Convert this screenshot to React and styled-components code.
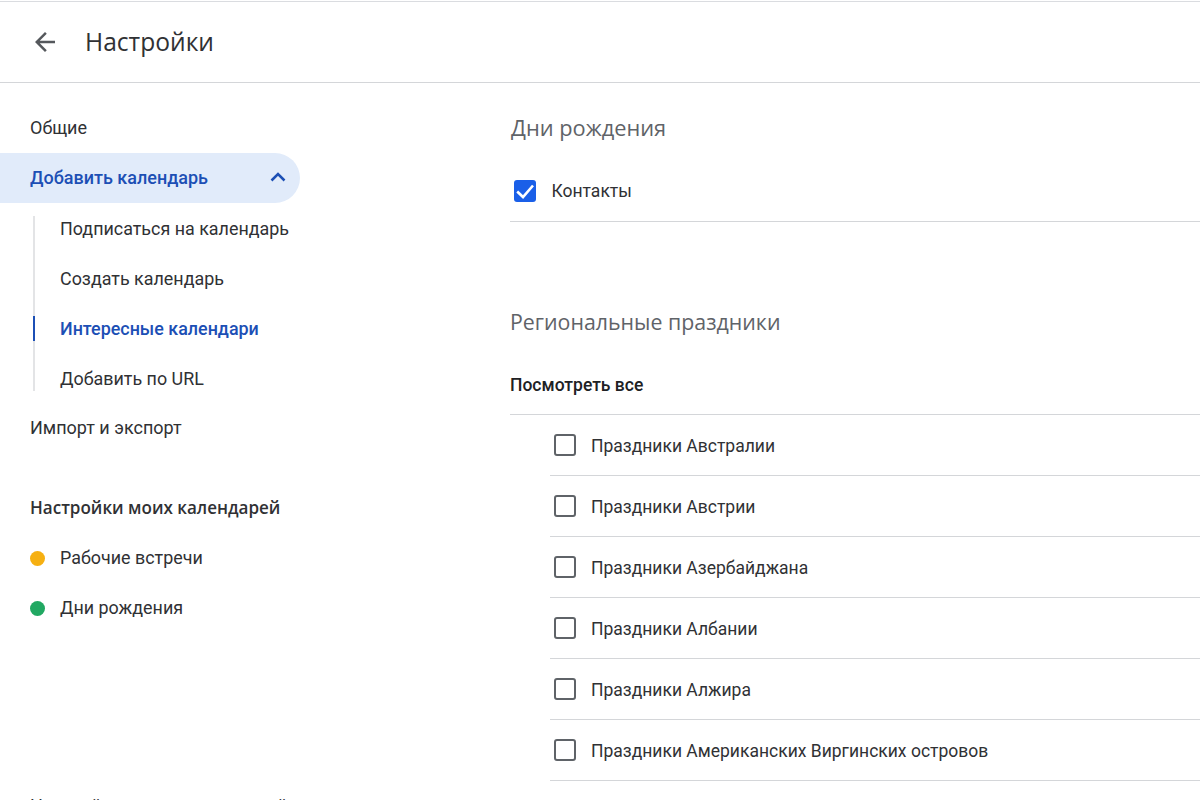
import React from 'react';
import styled, { createGlobalStyle } from 'styled-components';

const GlobalStyle = createGlobalStyle`
  html, body {
    margin: 0;
    padding: 0;
    height: 100%;
    overflow: hidden;
    background: #fff;
  }
  body {
    font-family: Roboto, "Liberation Sans", sans-serif;
    color: #303134;
  }
`;

const Page = styled.div`
  width: 1200px;
  height: 800px;
  overflow: hidden;
  padding-top: 1px;
  box-sizing: border-box;
  display: flex;
  flex-direction: column;
`;

const Header = styled.header`
  height: 82px;
  flex: none;
  box-sizing: border-box;
  border-top: 1px solid #dadce0;
  border-bottom: 1px solid #d4d6d9;
  display: flex;
  align-items: center;
  padding-left: 30px;
`;

const BackButton = styled.div`
  width: 30px;
  height: 30px;
  display: flex;
  align-items: center;
  justify-content: center;
  margin-right: 25px;
`;

const Title = styled.h1`
  margin: 0 0 2px;
  font: 400 24.6px "Open Sans", sans-serif;
  color: #303134;
`;

const Body = styled.div`
  display: flex;
  flex: 1;
  min-height: 0;
`;

const Sidebar = styled.nav`
  width: 300px;
  flex: none;
  padding-top: 20px;
  margin-right: 210px;
`;

const NavItem = styled.div`
  height: 50px;
  box-sizing: border-box;
  display: flex;
  align-items: center;
  justify-content: space-between;
  padding: 0 12px 2px 30px;
  font-size: 18px;
  color: ${(p) => (p.$active ? '#1c4fb5' : '#303134')};
  font-weight: ${(p) => (p.$active ? 500 : 400)};
  background: ${(p) => (p.$active ? '#e1ebfa' : 'transparent')};
  border-radius: ${(p) => (p.$active ? '0 25px 25px 0' : '0')};
`;

const SubList = styled.div`
  margin: 1px 0 -1px 33px;
`;

const SubItem = styled.div`
  position: relative;
  height: 50px;
  box-sizing: border-box;
  display: flex;
  align-items: center;
  padding: 0 0 2px 27px;
  font-size: 17.9px;
  color: ${(p) => (p.$active ? '#1c4fb5' : '#303134')};
  font-weight: ${(p) => (p.$active ? 500 : 400)};

  /* vertical rail, inset at both ends of the list */
  &::before {
    content: '';
    position: absolute;
    left: 0;
    top: 0;
    bottom: 0;
    width: 2px;
    background: #e3e4e6;
  }
  &:first-child::before {
    top: 12px;
  }
  &:last-child::before {
    bottom: 13px;
  }
  &::after {
    content: '';
    display: ${(p) => (p.$active ? 'block' : 'none')};
    position: absolute;
    left: 0;
    top: 12px;
    bottom: 13px;
    width: 2px;
    background: #1c4fb5;
  }
`;

const SectionLabel = styled.div`
  margin-top: 30px;
  height: 50px;
  box-sizing: border-box;
  display: flex;
  align-items: center;
  padding: 0 0 2px 30px;
  font: 600 17.05px "Open Sans", sans-serif;
  color: #303134;
`;

const CalendarRow = styled.div`
  height: 50px;
  display: flex;
  align-items: center;
  padding-left: 30px;
  font-size: 17.9px;
  color: #303134;
`;

const CalendarName = styled.span`
  margin-bottom: 2px;
`;

const Dot = styled.span`
  width: 15px;
  height: 15px;
  border-radius: 50%;
  margin-right: 15px;
  background: ${(p) => p.$color};
`;

const CutOffLabel = styled.div`
  margin-top: 162px;
  padding-left: 30px;
  font-size: 18px;
`;

const Main = styled.main`
  flex: 1;
  min-width: 0;
  padding-top: 27px;
`;

const SectionTitle = styled.h2`
  margin: 0 0 1px 1px;
  font: 400 21.8px/36px "Open Sans", sans-serif;
  color: #5f6368;
`;

const ContactRow = styled.div`
  height: 75px;
  padding-top: 14px;
  box-sizing: border-box;
  border-bottom: 1px solid #d4d6d9;
  display: flex;
  align-items: center;
  padding-left: 4px;
  gap: 15.5px;
  font-size: 17.5px;
  color: #303134;
`;

const CheckBox = styled.span`
  width: 22px;
  height: 22px;
  flex: none;
  box-sizing: border-box;
  border-radius: 3px;
  display: flex;
  align-items: center;
  justify-content: center;
  background: ${(p) => (p.$checked ? '#1a5fe8' : 'transparent')};
  border: ${(p) => (p.$checked ? 'none' : '2px solid #5f6368')};
`;

const RegionTitle = styled(SectionTitle)`
  margin: 82px 0 0;
  font-size: 21.35px;
`;

const ViewAll = styled.div`
  height: 75px;
  box-sizing: border-box;
  border-bottom: 1px solid #d4d6d9;
  padding-top: 16px;
  display: flex;
  align-items: center;
  font-size: 17.5px;
  font-weight: 500;
  color: #202124;
`;

const HolidayList = styled.div`
  margin-left: 40px;
`;

const HolidayRow = styled.div`
  height: 61px;
  box-sizing: border-box;
  border-bottom: 1px solid #d4d6d9;
  display: flex;
  align-items: center;
  padding-left: 4px;
  gap: 15px;
  font-size: 17.5px;
  color: #303134;
`;

const HolidayName = styled.span`
  margin-top: 2px;
`;

const holidays = [
  'Праздники Австралии',
  'Праздники Австрии',
  'Праздники Азербайджана',
  'Праздники Албании',
  'Праздники Алжира',
  'Праздники Американских Виргинских островов',
];

export default function App() {
  return (
    <>
      <GlobalStyle />
      <Page>
        <Header>
          <BackButton>
            <svg width="30" height="30" viewBox="0 0 24 24" fill="#55585c">
              <path d="M20 11H7.83l5.59-5.59L12 4l-8 8 8 8 1.41-1.41L7.83 13H20v-2z" />
            </svg>
          </BackButton>
          <Title>Настройки</Title>
        </Header>
        <Body>
          <Sidebar>
            <NavItem>Общие</NavItem>
            <NavItem $active>
              Добавить календарь
              <svg width="20" height="20" viewBox="0 0 20 20" fill="none" stroke="#1c4fb5" strokeWidth="2.5">
                <path d="M3.5 13.5l6.5-6.5 6.5 6.5" />
              </svg>
            </NavItem>
            <SubList>
              <SubItem>Подписаться на календарь</SubItem>
              <SubItem>Создать календарь</SubItem>
              <SubItem $active>Интересные календари</SubItem>
              <SubItem>Добавить по URL</SubItem>
            </SubList>
            <NavItem>Импорт и экспорт</NavItem>
            <SectionLabel>Настройки моих календарей</SectionLabel>
            <CalendarRow>
              <Dot $color="#f6b012" />
              <CalendarName>Рабочие встречи</CalendarName>
            </CalendarRow>
            <CalendarRow>
              <Dot $color="#21a862" />
              <CalendarName>Дни рождения</CalendarName>
            </CalendarRow>
            <CutOffLabel>Настройки других календарей</CutOffLabel>
          </Sidebar>
          <Main>
            <SectionTitle>Дни рождения</SectionTitle>
            <ContactRow>
              <CheckBox $checked>
                <svg width="22" height="22" viewBox="0 0 22 22" fill="none" stroke="#fff" strokeWidth="2.6">
                  <path d="M3.2 11.5L9 17 19 5.5" />
                </svg>
              </CheckBox>
              Контакты
            </ContactRow>
            <RegionTitle>Региональные праздники</RegionTitle>
            <ViewAll>Посмотреть все</ViewAll>
            <HolidayList>
              {holidays.map((name) => (
                <HolidayRow key={name}>
                  <CheckBox />
                  <HolidayName>{name}</HolidayName>
                </HolidayRow>
              ))}
            </HolidayList>
          </Main>
        </Body>
      </Page>
    </>
  );
}
